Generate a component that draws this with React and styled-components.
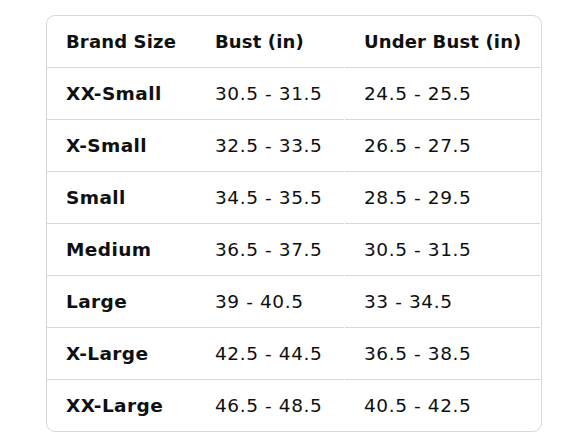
import React from "react";
import styled, { createGlobalStyle } from "styled-components";

const Global = createGlobalStyle`
  html, body { margin: 0; padding: 0; background: #ffffff; }
  body { font-family: "DejaVu Sans", "Open Sans", Arial, sans-serif; color: #0f1111; }
`;

const Page = styled.div`
  padding: 15px 0 0 46px;
`;

const Table = styled.div`
  width: 494px;
  border: 1px solid #d5d9d9;
  border-radius: 9px;
  display: grid;
  grid-template-columns: 149px 148px 196px;
  overflow: hidden;
`;

const Cell = styled.div`
  box-sizing: border-box;
  display: flex;
  align-items: center;
  padding-left: 19px;
  margin-left: ${(p) => (p.$col === 2 ? "1px" : "0")};
  border-bottom: ${(p) => (p.$last ? "none" : "1px solid #d5d9d9")};
  height: ${(p) => (p.$last ? "51px" : "52px")};
  font-size: ${(p) => (p.$head ? "18px" : "18.5px")};
  font-weight: ${(p) => (p.$bold ? 700 : 400)};
  letter-spacing: ${(p) => (p.$head ? "0.15px" : p.$bold ? "0.4px" : "0.6px")};
  white-space: nowrap;
`;

const header = ["Brand Size", "Bust (in)", "Under Bust (in)"];
const rows = [
  ["XX-Small", "30.5 - 31.5", "24.5 - 25.5"],
  ["X-Small", "32.5 - 33.5", "26.5 - 27.5"],
  ["Small", "34.5 - 35.5", "28.5 - 29.5"],
  ["Medium", "36.5 - 37.5", "30.5 - 31.5"],
  ["Large", "39 - 40.5", "33 - 34.5"],
  ["X-Large", "42.5 - 44.5", "36.5 - 38.5"],
  ["XX-Large", "46.5 - 48.5", "40.5 - 42.5"],
];

export default function App() {
  return (
    <Page>
      <Global />
      <Table>
        {header.map((h, i) => (
          <Cell key={"h" + i} $col={i} $bold $head>
            {h}
          </Cell>
        ))}
        {rows.map((r, ri) =>
          r.map((c, ci) => (
            <Cell
              key={ri + "-" + ci}
              $col={ci}
              $bold={ci === 0}
              $last={ri === rows.length - 1}
            >
              {c}
            </Cell>
          ))
        )}
      </Table>
    </Page>
  );
}
